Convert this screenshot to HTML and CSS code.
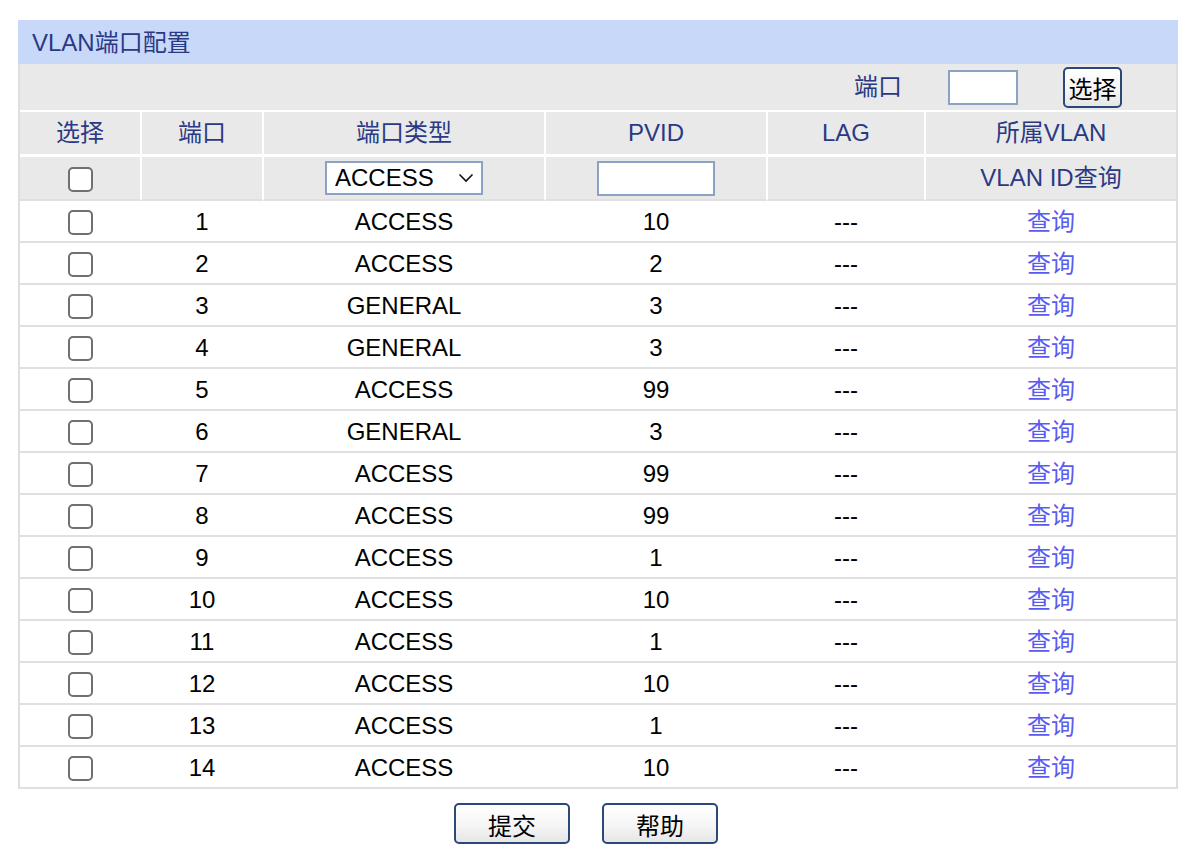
FILE: index.html
```html
<!DOCTYPE html>
<html lang="zh-CN">
<head>
<meta charset="utf-8">
<title>VLAN端口配置</title>
<link rel="stylesheet" href="styles.css">
</head>
<body>
<div class="page">
  <div class="title">VLAN端口配置</div>
  <div class="box">
    <div class="portbar">
      <span class="portlabel">端口</span>
      <input class="portinput" type="text">
      <button class="btn btn-sel">选择</button>
    </div>
    <table class="grid">
      <colgroup>
        <col class="c1"><col class="c2"><col class="c3"><col class="c4"><col class="c5"><col class="c6">
      </colgroup>
      <thead>
        <tr class="head">
          <th>选择</th><th>端口</th><th>端口类型</th><th>PVID</th><th>LAG</th><th>所属VLAN</th>
        </tr>
        <tr class="filter">
          <td><span class="cb"></span></td>
          <td></td>
          <td><span class="selwrap"><select class="sel"><option>ACCESS</option><option>GENERAL</option></select><svg class="chev" width="16" height="10" viewBox="0 0 16 10"><path d="M1.5 1.5 L8 8 L14.5 1.5" fill="none" stroke="#111" stroke-width="1.6"/></svg></span></td>
          <td><input class="pvid" type="text"></td>
          <td></td>
          <td class="navy">VLAN ID查询</td>
        </tr>
      </thead>
      <tbody>
        <tr><td><span class="cb"></span></td><td>1</td><td>ACCESS</td><td>10</td><td>---</td><td><a class="q">查询</a></td></tr>
        <tr><td><span class="cb"></span></td><td>2</td><td>ACCESS</td><td>2</td><td>---</td><td><a class="q">查询</a></td></tr>
        <tr><td><span class="cb"></span></td><td>3</td><td>GENERAL</td><td>3</td><td>---</td><td><a class="q">查询</a></td></tr>
        <tr><td><span class="cb"></span></td><td>4</td><td>GENERAL</td><td>3</td><td>---</td><td><a class="q">查询</a></td></tr>
        <tr><td><span class="cb"></span></td><td>5</td><td>ACCESS</td><td>99</td><td>---</td><td><a class="q">查询</a></td></tr>
        <tr><td><span class="cb"></span></td><td>6</td><td>GENERAL</td><td>3</td><td>---</td><td><a class="q">查询</a></td></tr>
        <tr><td><span class="cb"></span></td><td>7</td><td>ACCESS</td><td>99</td><td>---</td><td><a class="q">查询</a></td></tr>
        <tr><td><span class="cb"></span></td><td>8</td><td>ACCESS</td><td>99</td><td>---</td><td><a class="q">查询</a></td></tr>
        <tr><td><span class="cb"></span></td><td>9</td><td>ACCESS</td><td>1</td><td>---</td><td><a class="q">查询</a></td></tr>
        <tr><td><span class="cb"></span></td><td>10</td><td>ACCESS</td><td>10</td><td>---</td><td><a class="q">查询</a></td></tr>
        <tr><td><span class="cb"></span></td><td>11</td><td>ACCESS</td><td>1</td><td>---</td><td><a class="q">查询</a></td></tr>
        <tr><td><span class="cb"></span></td><td>12</td><td>ACCESS</td><td>10</td><td>---</td><td><a class="q">查询</a></td></tr>
        <tr><td><span class="cb"></span></td><td>13</td><td>ACCESS</td><td>1</td><td>---</td><td><a class="q">查询</a></td></tr>
        <tr><td><span class="cb"></span></td><td>14</td><td>ACCESS</td><td>10</td><td>---</td><td><a class="q">查询</a></td></tr>
      </tbody>
    </table>
  </div>
  <div class="actions">
    <button class="btn btn-big">提交</button>
    <button class="btn btn-big">帮助</button>
  </div>
</div>
</body>
</html>
```

FILE: styles.css
```css
html, body {
  margin: 0;
  padding: 0;
  background: #fff;
}
body {
  font-family: "Liberation Sans", "Noto Sans CJK SC", sans-serif;
  font-size: 24px;
  color: #000;
}
.page {
  width: 1160px;
  margin-left: 18px;
  padding-top: 20px;
}
.title {
  box-sizing: border-box;
  height: 44px;
  line-height: 42px;
  padding-top: 2px;
  background: #c7d8f9;
  color: #2b3984;
  padding-left: 14px;
  white-space: nowrap;
}
.box {
  border-left: 2px solid #dedede;
  border-right: 2px solid #dedede;
}
.portbar {
  height: 46px;
  background: #e9e9e9;
  border-bottom: 2px solid #fff;
  display: flex;
  align-items: center;
  justify-content: flex-end;
  padding-right: 54px;
}
.portlabel {
  color: #2b3984;
  line-height: 28px;
  margin-right: 46px;
}
.portinput {
  box-sizing: border-box;
  width: 70px;
  height: 35px;
  margin: 0 45px 0 0;
  border: 2px solid #8ca2c2;
  background: #fff;
  padding: 0;
  outline: none;
}
.btn {
  box-sizing: border-box;
  font-family: "Liberation Sans", "Noto Sans CJK SC", sans-serif;
  font-size: 24px;
  color: #000;
  border: 2px solid #2b4878;
  border-radius: 5px;
  background: linear-gradient(#ffffff 0%, #f4f4f4 60%, #e6e6e6 100%);
  padding: 6px 0 0 0;
  line-height: 1;
  cursor: pointer;
}
.btn-sel {
  width: 59px;
  height: 41px;
}
.grid {
  width: 1156px;
  border-collapse: separate;
  border-spacing: 0;
  table-layout: fixed;
}
.c1 { width: 122px; }
.c2 { width: 122px; }
.c3 { width: 282px; }
.c4 { width: 222px; }
.c5 { width: 158px; }
.c6 { width: 250px; }
.grid th, .grid td {
  padding: 0;
  text-align: center;
  vertical-align: middle;
  white-space: nowrap;
  line-height: 28px;
}
.head th {
  font-weight: normal;
  color: #2b3984;
  background: #e9e9e9;
  height: 42px;
  border-right: 2px solid #fff;
  border-bottom: 3px solid #fff;
}
.head th:last-child, .filter td:last-child {
  border-right: 0;
}
.filter td {
  background: #e9e9e9;
  height: 42px;
  border-right: 2px solid #fff;
  border-bottom: 2px solid #e0e0e0;
}
.navy {
  color: #2b3984;
}
.grid tbody td {
  height: 38px;
  padding-top: 2px;
  padding-right: 2px;
  border-bottom: 2px solid #e0e0e0;
  background: #fff;
}
.grid tbody td:last-child {
  padding-right: 0;
}
.cb {
  display: inline-block;
  box-sizing: border-box;
  width: 25px;
  height: 25px;
  border: 2px solid #707070;
  border-radius: 5px;
  background: #fff;
  vertical-align: middle;
}
.grid tbody .cb {
  position: relative;
  top: -1px;
}
.selwrap {
  position: relative;
  display: inline-block;
  vertical-align: middle;
}
.sel {
  -webkit-appearance: none;
  appearance: none;
  box-sizing: border-box;
  width: 158px;
  height: 34px;
  border: 2px solid #8ca2c2;
  border-radius: 0;
  background: #fff;
  font-family: "Liberation Sans", "Noto Sans CJK SC", sans-serif;
  font-size: 24px;
  color: #000;
  padding: 0 0 0 8px;
  margin: 0;
  line-height: 30px;
  outline: none;
  display: block;
}
.chev {
  position: absolute;
  left: 133px;
  top: 12px;
  pointer-events: none;
}
.pvid {
  box-sizing: border-box;
  width: 118px;
  height: 35px;
  border: 2px solid #8ca2c2;
  background: #fff;
  margin: 0;
  padding: 0;
  vertical-align: middle;
  outline: none;
}
.q {
  color: #5a5cf0;
  text-decoration: none;
  cursor: pointer;
}
.actions {
  display: flex;
  justify-content: center;
  gap: 32px;
  padding-right: 24px;
  margin-top: 14px;
}
.btn-big {
  width: 116px;
  height: 41px;
}
```
